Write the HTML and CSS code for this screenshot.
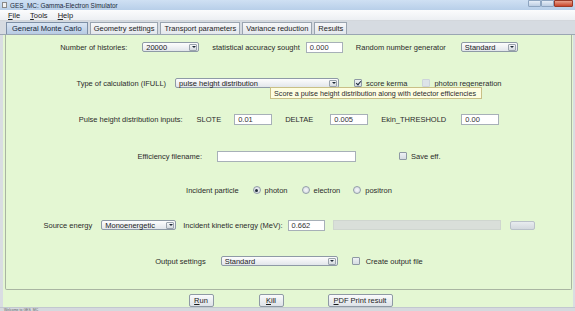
FILE: index.html
```html
<!DOCTYPE html>
<html>
<head>
<meta charset="utf-8">
<link rel="stylesheet" href="styles.css">
</head>
<body>
<div class="window">
  <div class="titlebar">
    <span class="appicon"></span>
    <span class="title">GES_MC: Gamma-Electron Simulator</span>
    <div class="winbtns">
      <span class="wb"></span><span class="wb"></span><span class="wb close"></span>
    </div>
  </div>
  <div class="menubar">
    <span class="menu"><u>F</u>ile</span>
    <span class="menu"><u>T</u>ools</span>
    <span class="menu"><u>H</u>elp</span>
  </div>
  <div class="tabs">
    <span class="tab active">General Monte Carlo</span>
    <span class="tab">Geometry settings</span>
    <span class="tab">Transport parameters</span>
    <span class="tab">Variance reduction</span>
    <span class="tab">Results</span>
  </div>
  <div class="body">
    <div class="panel">
      <div class="row r1">
        <span class="lbl">Number of histories:</span>
        <span class="select w57 g15"><span class="val">20000</span><span class="arr"></span></span>
        <span class="lbl g13">statistical accuracy sought</span>
        <span class="input w37 g6">0.000</span>
        <span class="lbl g13">Random number generator</span>
        <span class="select w57 g15"><span class="val">Standard</span><span class="arr"></span></span>
      </div>
      <div class="row r2">
        <span class="lbl">Type of calculation (IFULL)</span>
        <span class="select w164 g9"><span class="val">pulse height distribution</span><span class="arr"></span></span>
        <span class="check on g15"></span>
        <span class="lbl g4">score kerma</span>
        <span class="check off g15"></span>
        <span class="lbl g4">photon regeneration</span>
      </div>
      <div class="row r3">
        <span class="lbl">Pulse height distribution inputs:</span>
        <span class="lbl g14">SLOTE</span>
        <span class="input w38 g13">0.01</span>
        <span class="lbl g13">DELTAE</span>
        <span class="input w38 g17">0.005</span>
        <span class="lbl g13">Ekin_THRESHOLD</span>
        <span class="input w38 g15">0.00</span>
      </div>
      <div class="row r4">
        <span class="lbl">Efficiency filename:</span>
        <span class="input w139 g15"></span>
        <span class="check g43"></span>
        <span class="lbl g4">Save eff.</span>
      </div>
      <div class="row r5">
        <span class="lbl">Incident particle</span>
        <span class="radio on g14"></span>
        <span class="lbl g4">photon</span>
        <span class="radio g14"></span>
        <span class="lbl g4">electron</span>
        <span class="radio g13"></span>
        <span class="lbl g4">positron</span>
      </div>
      <div class="row r6">
        <span class="lbl">Source energy</span>
        <span class="select w75 g9"><span class="val">Monoenergetic</span><span class="arr"></span></span>
        <span class="lbl g7">Incident kinetic energy (MeV):</span>
        <span class="input w37 g5">0.662</span>
        <span class="field g8"></span>
        <span class="smallbtn g9"></span>
      </div>
      <div class="row r7">
        <span class="lbl">Output settings</span>
        <span class="select w117 g15"><span class="val">Standard</span><span class="arr"></span></span>
        <span class="check g14"></span>
        <span class="lbl g6">Create output file</span>
      </div>
      <div class="tooltip">Score a pulse height distribution along with detector efficiencies</div>
    </div>
    <div class="buttons">
      <span class="btn w25"><u>R</u>un</span>
      <span class="btn w25 g45"><u>K</u>ill</span>
      <span class="btn w65 g44"><u>P</u>DF Print result</span>
    </div>
  </div>
  <div class="status">Welcome to GES_MC</div>
</div>
</body>
</html>
```
FILE: styles.css
```css
* { box-sizing: border-box; }
html, body { margin: 0; padding: 0; }
body {
  width: 575px;
  height: 311px;
  overflow: hidden;
  font-family: "Liberation Sans", Arial, sans-serif;
  font-size: 7.5px;
  color: #2b2b2b;
  background: #dfe3e8;
}
.window {
  width: 575px;
  height: 311px;
  display: flex;
  flex-direction: column;
  background: #d9dde2;
}
.titlebar {
  height: 10px;
  flex: none;
  display: flex;
  align-items: center;
  background: linear-gradient(#cfe0f3, #b8cfe9);
  padding-left: 2px;
}
.appicon {
  width: 5px;
  height: 6px;
  background: #f2f2f2;
  border: 1px solid #8a8a8a;
  margin-right: 3px;
}
.title {
  font-size: 6.4px;
  color: #1d2b3a;
}
.winbtns {
  margin-left: auto;
  display: flex;
  align-self: flex-start;
  margin-right: 2px;
}
.wb {
  width: 13px;
  height: 7px;
  border: 1px solid #8ea5c0;
  background: linear-gradient(#e6eef8, #bccde2);
  border-radius: 0 0 1px 1px;
}
.wb.close {
  width: 19px;
  background: linear-gradient(#e8a08c, #c9452a);
  border-color: #9a3a28;
}
.menubar {
  height: 11px;
  flex: none;
  display: flex;
  align-items: center;
  background: linear-gradient(#fbfcfd, #eceff3);
  padding-left: 8px;
  border-bottom: 1px solid #d3d7dc;
}
.menu {
  color: #222;
  margin-right: 10px;
}
.tabs {
  height: 14px;
  flex: none;
  display: flex;
  align-items: flex-end;
  padding-left: 6px;
  background: #d6dbe1;
  border-bottom: 1px solid #9aa6b3;
}
.tab {
  height: 12px;
  padding: 0 3px;
  display: flex;
  align-items: center;
  white-space: nowrap;
  border: 1px solid #9aa4b0;
  border-bottom: none;
  background: linear-gradient(#f6f7f9, #e3e7ec);
  margin-right: 2px;
  color: #1e1e1e;
}
.tab.active {
  background: linear-gradient(#d9e5f3, #b7cbe3);
  border-color: #7d8fa6;
  color: #17263a;
  padding: 0 5px;
}
.body {
  flex: 1;
  display: flex;
  flex-direction: column;
  background: #e4f7d3;
  margin: 0 2px 0 3px;
  padding: 0 1px 0 2px;
}
.panel {
  position: relative;
  height: 255px;
  border: 1px solid #a9b5a2;
  border-top: none;
  border-radius: 0 0 2px 2px;
  display: flex;
  flex-direction: column;
  padding-top: 6px;
}
.row {
  height: 12px;
  display: flex;
  align-items: center;
  justify-content: center;
  flex: none;
  padding-left: 1px;
}
.r2 { margin-top: 24px; }
.r3 { margin-top: 24px; }
.r4 { margin-top: 25px; }
.r5 { margin-top: 22px; }
.r6 { margin-top: 23px; }
.r7 { margin-top: 24px; }
.lbl { white-space: nowrap; }
.g4 { margin-left: 4px; }
.g5 { margin-left: 5px; }
.g6 { margin-left: 6px; }
.g7 { margin-left: 7px; }
.g8 { margin-left: 8px; }
.g9 { margin-left: 9px; }
.g13 { margin-left: 13px; }
.g14 { margin-left: 14px; }
.g15 { margin-left: 15px; }
.g17 { margin-left: 17px; }
.g43 { margin-left: 43px; }
.g44 { margin-left: 44px; }
.g45 { margin-left: 45px; }
.w25 { width: 25px; }
.w37 { width: 37px; }
.w38 { width: 38px; }
.w57 { width: 57px; }
.w65 { width: 65px; }
.w75 { width: 75px; }
.w117 { width: 117px; }
.w139 { width: 139px; }
.w164 { width: 164px; }
.select {
  height: 10px;
  display: flex;
  align-items: center;
  border: 1px solid #8e9aa6;
  border-radius: 2px;
  background: linear-gradient(#fdfdfd, #e2e6eb);
  padding-left: 3px;
  color: #1c1c1c;
}
.select .val { flex: 1; white-space: nowrap; overflow: hidden; }
.select .arr {
  width: 8px;
  height: 7px;
  margin-right: 1px;
  border: 1px solid #9aa3ad;
  border-radius: 1px;
  background: linear-gradient(#f6f7f8, #d4d9df);
  position: relative;
}
.select .arr::after {
  content: "";
  position: absolute;
  left: 1.5px;
  top: 1.5px;
  border-left: 2px solid transparent;
  border-right: 2px solid transparent;
  border-top: 2.5px solid #1e2a38;
}
.input {
  height: 11px;
  display: flex;
  align-items: center;
  background: #ffffff;
  border: 1px solid #a7b0b8;
  padding-left: 3px;
  color: #333;
}
.check {
  width: 8px;
  height: 8px;
  border: 1px solid #8e99a4;
  border-radius: 1px;
  background: linear-gradient(#eef1f4, #d6dce2);
  position: relative;
}
.check.off {
  border-color: #cdd4db;
  background: #dde3e8;
}
.check.on::after {
  content: "";
  position: absolute;
  left: 2px;
  top: 0;
  width: 2px;
  height: 4px;
  border-right: 1.3px solid #1c2a3c;
  border-bottom: 1.3px solid #1c2a3c;
  transform: rotate(40deg);
}
.radio {
  width: 8px;
  height: 8px;
  border-radius: 50%;
  border: 1px solid #939ea9;
  background: radial-gradient(#f6f7f9, #cfd6dd);
  position: relative;
}
.radio.on::after {
  content: "";
  position: absolute;
  left: 1.5px;
  top: 1.5px;
  width: 3px;
  height: 3px;
  border-radius: 50%;
  background: #1f2b3a;
}
.field {
  width: 168px;
  height: 10px;
  background: #d9dfd9;
  border: 1px solid #cfd6cf;
}
.smallbtn {
  width: 25px;
  height: 9px;
  border: 1px solid #b9c1c9;
  border-radius: 2px;
  background: linear-gradient(#e8ecef, #d3d9de);
}
.tooltip {
  position: absolute;
  left: 264px;
  top: 52px;
  width: 212px;
  height: 12px;
  display: flex;
  align-items: center;
  padding-left: 3px;
  background: #fdfde0;
  border: 1px solid #c9bf86;
  color: #2a2a2a;
  font-size: 7.2px;
  white-space: nowrap;
}
.buttons {
  height: 17px;
  flex: none;
  display: flex;
  align-items: center;
  justify-content: center;
  padding-left: 4px;
  padding-top: 4px;
}
.btn {
  height: 13px;
  display: flex;
  align-items: center;
  justify-content: center;
  border: 1px solid #8f9aa5;
  border-radius: 2px;
  background: linear-gradient(#fafbfc, #dde2e7);
  color: #1c1c1c;
  white-space: nowrap;
}
.status {
  height: 6px;
  flex: none;
  background: #d5d9de;
  border-top: 1px solid #c2c8cf;
  padding-left: 4px;
  font-size: 3.5px;
  line-height: 5px;
  color: #666;
  white-space: nowrap;
}
```
